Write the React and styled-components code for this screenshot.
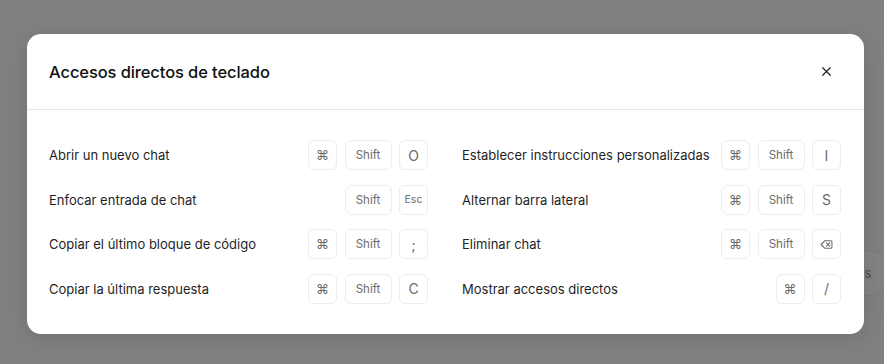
import React from "react";
import styled, { createGlobalStyle } from "styled-components";

const GlobalStyle = createGlobalStyle`
  html, body {
    margin: 0;
    padding: 0;
    background: #808080;
    font-family: Inter, "Noto Sans", "Liberation Sans", sans-serif;
    -webkit-font-smoothing: antialiased;
  }
`;

const Page = styled.div`
  position: relative;
  width: 884px;
  height: 364px;
  overflow: hidden;
  display: flex;
  align-items: flex-start;
  padding: 34px 0 0 27px;
  box-sizing: border-box;
`;

// faint piece of the page behind the overlay
const BehindButton = styled.div`
  position: absolute;
  left: 845px;
  top: 250px;
  width: 44px;
  height: 44px;
  border-radius: 50%;
  border: 1px solid #7a7a7a;
  background: #838383;
  color: #4a4a4a;
  font-size: 13px;
  display: flex;
  align-items: center;
  justify-content: center;
`;

const Dialog = styled.div`
  position: relative;
  width: 837px;
  height: 300px;
  background: #fff;
  border-radius: 14px;
  box-shadow: 0 4px 20px rgba(0, 0, 0, 0.12);
  display: flex;
  flex-direction: column;
`;

const Header = styled.div`
  height: 75px;
  display: flex;
  align-items: center;
  justify-content: space-between;
  padding: 0 28px 0 22px;
  border-bottom: 1px solid #e6e6e6;
  flex-shrink: 0;
`;

const Title = styled.h2`
  margin: 0;
  font-size: 16.5px;
  font-weight: 500;
  color: #111;
  letter-spacing: -0.1px;
`;

const CloseButton = styled.button`
  border: none;
  background: none;
  padding: 0;
  width: 20px;
  height: 20px;
  display: flex;
  align-items: center;
  justify-content: center;
  color: #222;
  cursor: pointer;
`;

const Body = styled.div`
  padding: 30px 23px 30px 22px;
  display: grid;
  grid-template-columns: 379px 379px;
  column-gap: 34px;
  row-gap: 14.67px;
`;

const Row = styled.div`
  height: 30px;
  display: flex;
  align-items: center;
  justify-content: space-between;
`;

const Label = styled.span`
  font-size: 13px;
  color: #1f1f1f;
  white-space: nowrap;
`;

const Keys = styled.div`
  display: flex;
  gap: 7.5px;
`;

const Key = styled.kbd`
  box-sizing: border-box;
  height: 30px;
  min-width: ${(p) => (p.$wide ? "47px" : "29px")};
  padding: 0 3px;
  border: 1px solid #ececec;
  border-radius: 6px;
  display: flex;
  align-items: center;
  justify-content: center;
  font-family: Inter, "Noto Sans", "Liberation Sans", sans-serif;
  font-size: ${(p) => p.$size || 12}px;
  color: #6b6b6b;
  background: #fff;
`;

const BackspaceIcon = () => (
  <svg width="13" height="13" viewBox="0 0 24 24" fill="none" stroke="currentColor" strokeWidth="2" strokeLinecap="round" strokeLinejoin="round">
    <path d="M20 5H9l-7 7 7 7h11a2 2 0 0 0 2-2V7a2 2 0 0 0-2-2Z" />
    <line x1="18" y1="9" x2="12" y2="15" />
    <line x1="12" y1="9" x2="18" y2="15" />
  </svg>
);

const keyProps = (k) => {
  if (k === "Shift") return { $wide: true, $size: 11.5 };
  if (k === "Esc") return { $size: 10.5 };
  if (k === "⌘") return { $size: 13 };
  return { $size: 14 };
};

const left = [
  { label: "Abrir un nuevo chat", keys: ["⌘", "Shift", "O"] },
  { label: "Enfocar entrada de chat", keys: ["Shift", "Esc"] },
  { label: "Copiar el último bloque de código", keys: ["⌘", "Shift", ";"] },
  { label: "Copiar la última respuesta", keys: ["⌘", "Shift", "C"] },
];

const right = [
  { label: "Establecer instrucciones personalizadas", keys: ["⌘", "Shift", "I"] },
  { label: "Alternar barra lateral", keys: ["⌘", "Shift", "S"] },
  { label: "Eliminar chat", keys: ["⌘", "Shift", "backspace"] },
  { label: "Mostrar accesos directos", keys: ["⌘", "/"] },
];

function Shortcut({ label, keys }) {
  return (
    <Row>
      <Label>{label}</Label>
      <Keys>
        {keys.map((k) => (
          <Key key={k} {...keyProps(k)}>
            {k === "backspace" ? <BackspaceIcon /> : k}
          </Key>
        ))}
      </Keys>
    </Row>
  );
}

export default function App() {
  const cells = [];
  left.forEach((item, i) => {
    cells.push(<Shortcut key={"l" + i} {...item} />);
    cells.push(<Shortcut key={"r" + i} {...right[i]} />);
  });

  return (
    <>
      <GlobalStyle />
      <Page>
        <BehindButton>s</BehindButton>
        <Dialog>
          <Header>
            <Title>Accesos directos de teclado</Title>
            <CloseButton aria-label="Cerrar">
              <svg width="13" height="13" viewBox="0 0 24 24" fill="none" stroke="currentColor" strokeWidth="2.2" strokeLinecap="round">
                <line x1="5" y1="5" x2="19" y2="19" />
                <line x1="19" y1="5" x2="5" y2="19" />
              </svg>
            </CloseButton>
          </Header>
          <Body>{cells}</Body>
        </Dialog>
      </Page>
    </>
  );
}
